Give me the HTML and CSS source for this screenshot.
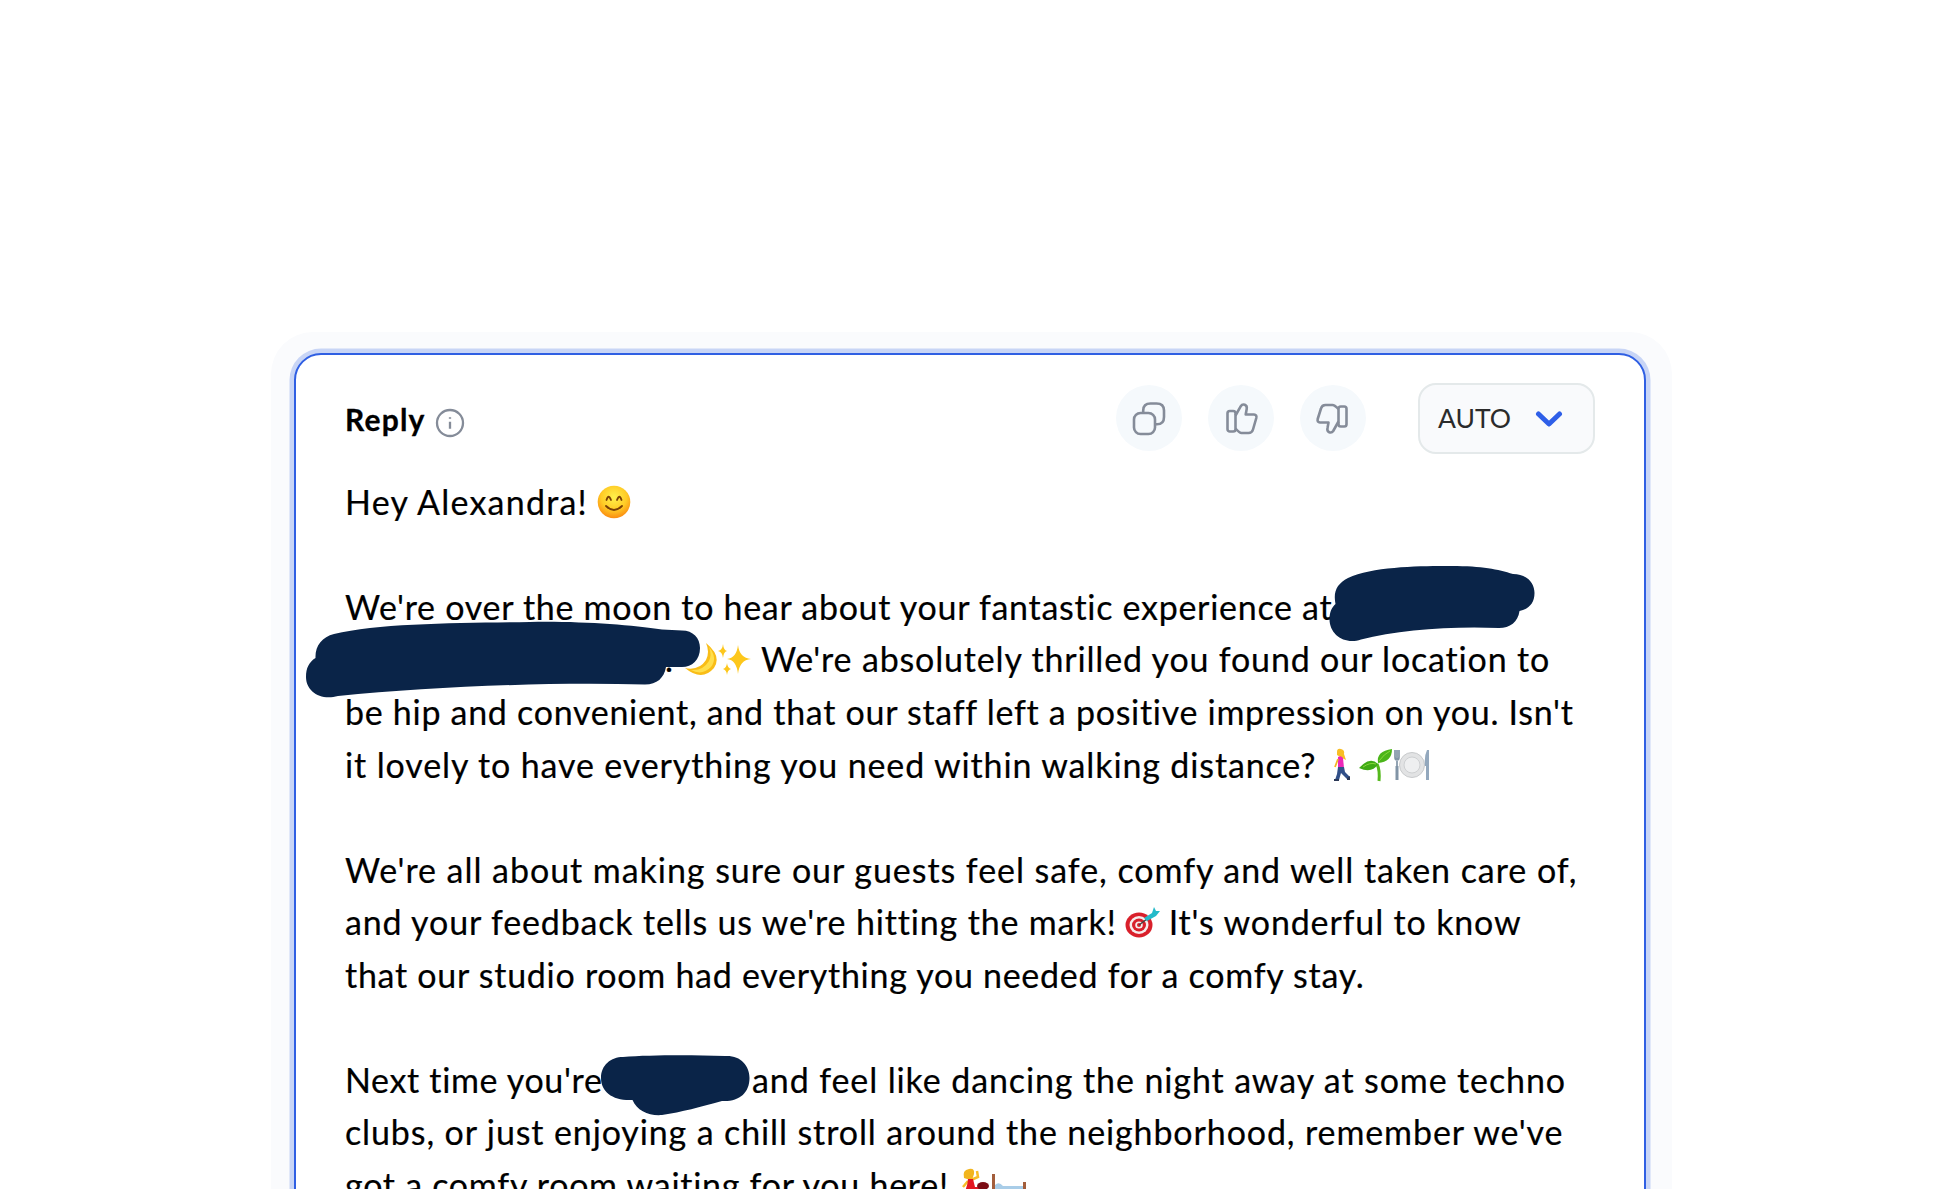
FILE: index.html
```html
<!DOCTYPE html>
<html lang="en">
<head>
    <meta charset="UTF-8">
    <title>Reply</title>
    <link rel="stylesheet" href="styles.css">
</head>
<body>

<div class="panel">
    <div class="card">
        <!-- header with actions -->
        <div class="card-header">
            <span class="title">Reply</span>
            <svg class="info" viewBox="0 0 30 30">
                <circle cx="15" cy="15" r="13"/>
                <path d="M15 13.8v7"/>
                <path d="M15 9.2v1.600"/>
            </svg>
            <div class="actions">
                <button class="icon-btn">
                    <svg viewBox="0 0 36 36">
                        <path d="M12.2 13V10.500Q12.200 3.500 19.500 3.500H25.500Q33 3.500 33 10.500V17Q33 24.300 26 24.300H24.500"/>
                        <rect x="3" y="13" width="21" height="21" rx="6.500"/>
                    </svg>
                </button>
                <button class="icon-btn">
                    <svg viewBox="0 0 36 36">
                        <rect x="4.500" y="11" width="8" height="20.500" rx="2.300"/>
                        <path d="M12.500 15.500L17.800 6.200Q19.300 3.800 21.800 4.800Q24.300 5.800 23.700 9L22.700 14.500H31Q34 14.700 33.300 18L30 29.500Q29 33 25.500 33H18.500Q16.500 33 12.500 28.500"/>
                    </svg>
                </button>
                <button class="icon-btn">
                    <svg viewBox="0 0 36 36">
                        <rect x="23.500" y="6.500" width="8" height="20" rx="2.300"/>
                        <path d="M23.500 21.500L18.200 31Q16.700 33.200 14.200 32.200Q11.800 31.200 12.500 28L13.500 22.500H5Q2 22.300 2.700 19L6 8.500Q7 5 10.500 5H17.500Q19.500 5 23.500 9"/>
                    </svg>
                </button>
            </div>
            <button class="select">
                <span>AUTO</span>
                <svg viewBox="0 0 28 20"><path d="M3.500 5L14 15L24.500 5"/></svg>
            </button>
        </div>

        <!-- reply text -->
        <div class="reply">
            <p class="line"><span class="s1">Hey Alexandra!</span>
                <svg class="emoji smile" viewBox="0 0 34 34">
                    <defs><radialGradient id="face" cx=".5" cy=".35" r=".65"><stop offset="0" stop-color="#fff04b"/><stop offset=".6" stop-color="#ffcb26"/><stop offset="1" stop-color="#fb8b10"/></radialGradient></defs>
                    <circle cx="17" cy="17" r="16.300" fill="url(#face)"/>
                    <g fill="none" stroke="#7b3f05" stroke-width="1.800" stroke-linecap="round"><path d="M9.500 15Q11.500 8.500 14 15M20 15Q22.500 8.500 24.500 15M9 21Q17 29 25 21"/></g>
                </svg>
            </p>
            <p class="line"></p>
            <p class="line"><span class="s2">We're over the moon to hear about your fantastic experience at</span></p>
            <p class="line"><span class="s3">.</span>
                <svg class="emoji moon" viewBox="0 0 34 34"><path d="M22 1Q38 14 30 26Q18 40 1 26Q15 29 22 18Q26 10 22 1Z" fill="#f9bd17"/><path d="M25 5Q34 16 27 25Q18 34 7 28Q19 29 25 19Q28 13 25 5Z" fill="#ffdf4c"/></svg>
                <svg class="emoji sparkle" viewBox="0 0 34 34"><g fill="#fdc71b"><path d="M20 3Q21.500 16 33 17Q21.500 18 20 32Q18.500 18 9 17Q18.500 16 20 3Z"/><path d="M5 2Q5.500 8 9 9Q5.500 10 5 16Q4.500 10 0 9Q4.500 8 5 2ZM9 21Q9.500 26 13 27Q9.500 28 9 33Q8.500 28 5 27Q8.500 26 9 21Z"/></g></svg>
                <span class="s4">We're absolutely thrilled you found our location to</span>
            </p>
            <p class="line"><span class="s5">be hip and convenient, and that our staff left a positive impression on you. Isn't</span></p>
            <p class="line"><span class="s6">it lovely to have everything you need within walking distance?</span>
                <svg class="emoji walk" viewBox="0 0 18 34"><path d="M4 4Q4 0 8 1Q12 2 11 6L13 12L9 10L4 7Z" fill="#f8bd24"/><path d="M5 9Q8 7 10 10L11 20H5Z" fill="#ec27b8"/><path d="M5 19H11L12 24L17 29L14 31L8 25L6 32H2L4 26Z" fill="#314f88"/><path d="M5 11L2 19" stroke="#f3b525" stroke-width="1.800" fill="none"/><path d="M1 31H6V33H1ZM14 30L17 28V32H14Z" fill="#2b3857"/></svg>
                <svg class="emoji plant" viewBox="0 0 34 34"><path d="M20 33Q21 22 18 16" stroke="#55b91d" stroke-width="3" fill="none"/><path d="M19 16Q11 8 0 20Q13 26 19 16Z" fill="#3faa16"/><path d="M19 15Q17 3 33 1Q33 14 19 15Z" fill="#4bb51a"/><path d="M4 19Q11 14 17 16M20 13Q25 6 31 3" stroke="#86d83a" fill="none"/></svg>
                <svg class="emoji plate" viewBox="0 0 36 34"><circle cx="18" cy="17" r="12.500" fill="#e2e3e4" stroke="#c8cacc"/><circle cx="18" cy="17" r="8" fill="#eeeff0" stroke="#ced0d2"/><path d="M3 13V31M1 2V9Q1 12 3 12Q5 12 5 9V2M3 2V11" fill="none" stroke="#8194a6" stroke-width="1.700"/><path d="M3 18V32" stroke="#8194a6" stroke-width="3"/><path d="M33 2Q30 8 31 18H32V32H35V2Z" fill="#93a8bd"/></svg>
            </p>
            <p class="line"></p>
            <p class="line"><span class="s7">We're all about making sure our guests feel safe, comfy and well taken care of,</span></p>
            <p class="line"><span class="s8">and your feedback tells us we're hitting the mark!</span>
                <svg class="emoji target" viewBox="0 0 36 34"><ellipse cx="14" cy="20" rx="13.500" ry="12.500" fill="#d9202b"/><ellipse cx="14" cy="20" rx="9.500" ry="9" fill="#f6eded"/><ellipse cx="14" cy="20" rx="7" ry="6.500" fill="#d9202b"/><ellipse cx="14" cy="20" rx="3.800" ry="3.500" fill="#f6eded"/><circle cx="14" cy="20" r="2" fill="#d9202b"/><path d="M14 20L22 14" stroke="#444" stroke-width="1.500"/><path d="M19 13L27 8L29 2L31 6L35 6L31 11L22 16Z" fill="#25bac9"/></svg>
                <span class="s9">It's wonderful to know</span>
            </p>
            <p class="line"><span class="s10">that our studio room had everything you needed for a comfy stay.</span></p>
            <p class="line"></p>
            <p class="line"><span class="s11">Next time you're</span><span class="s12">and feel like dancing the night away at some techno</span></p>
            <p class="line"><span class="s13">clubs, or just enjoying a chill stroll around the neighborhood, remember we've</span></p>
            <p class="line"><span class="s14">got a comfy room waiting for you here!</span>
                <svg class="emoji dance" viewBox="0 0 34 34"><path d="M7 10Q5 2 12 1Q18 0 17 6L15 12L10 11Z" fill="#f2b51e"/><path d="M14 12L21 9L20 3M11 13L6 19" stroke="#f7bd28" stroke-width="2.500" fill="none"/><path d="M11 11H16L18 19Q25 18 31 25L20 31H1Q10 25 11 11Z" fill="#e31620"/><ellipse cx="26" cy="18" rx="6" ry="4" fill="#7c0c14"/></svg>
                <svg class="emoji bed" viewBox="0 0 36 34"><path d="M1 6H4V31H1ZM32 14H35V31H32Z" fill="#a35e3c"/><path d="M4 19H32V27H4Z" fill="#75a6d0"/><path d="M4 17Q8 13 12 18H32V21H4Z" fill="#a9cde8"/></svg>
            </p>
        </div>
    </div>
</div>

<!-- marker strokes over the hidden names -->
<svg class="marker" viewBox="0 0 1944 1189">
    <path d="M1335.500 604C1333 591 1337 584 1348 578C1372 567 1415 566 1445 566C1480 565.500 1497 569 1513 574C1527 574 1534.500 583 1534.500 593C1534.500 603 1529 609 1519.500 611C1518 622 1510 628 1499 628C1450 626 1398 630 1361 639.500C1345 645 1329.500 635 1329.500 619C1329.500 612 1332 607 1335.500 604Z"/>
    <path d="M315.500 658C315 646 322 637 334 634C380 623 460 623 530 622C580 621 630 625 662 629.500L682 630.500C693 630.500 700 638 700 648C700 660 692 667 682 667H666C664 678 657 684.500 645 684.500C540 682 430 687 338 696C320 701 306 691 306 677C306 668 309 662 315.500 658Z"/>
    <path d="M601 1078C601 1065 611 1057 623 1057C650 1055 690 1055 725 1056C740 1055 749.500 1065 749.500 1078C749.500 1093 739 1102 722 1101C700 1107 682 1112 662 1115C649 1116 637 1111 632.500 1100C613 1101 601 1092 601 1078Z"/>
</svg>

</body>
</html>
```
FILE: styles.css
```css
* {
    box-sizing: border-box;
}
body {
    margin: 0;
    padding-top: 332px;
    height: 1189px;
    overflow: hidden;
    background: #fff;
    color: #000;
    font-family: Lato, sans-serif;
    position: relative;
}
.panel {
    width: 1401px;
    height: 857px;
    margin-left: 271px;
    padding: 21px 26px 0 23px;
    border-radius: 42px 42px 0 0;
    background: #fafbfd;
    overflow: hidden;
}
.card {
    height: 900px;
    padding: 0 49px;
    border: 2px solid #2f5fe3;
    border-radius: 27px;
    box-shadow: 0 0 0 4.5px #c8d5f6;
    background: #fff;
}
.card-header {
    display: flex;
    align-items: center;
    height: 120px;
    padding-top: 6px;
}
.title {
    margin-top: 2px;
    font-size: 30px;
    font-weight: bold;
    letter-spacing: 1.2px;
    -webkit-text-stroke: 0.3px #000;
}
.info {
    width: 30px;
    height: 30px;
    margin: 9px 0 0 9px;
    fill: none;
    stroke: #858c99;
    stroke-width: 2.3;
}
.actions {
    display: flex;
    gap: 26px;
    margin-left: auto;
}
.icon-btn {
    display: flex;
    align-items: center;
    justify-content: center;
    width: 66px;
    height: 66px;
    padding: 0;
    border: 0;
    border-radius: 50%;
    background: #f5f9fc;
}
.icon-btn svg {
    width: 36px;
    height: 36px;
    fill: none;
    stroke: #858c99;
    stroke-width: 2.6;
    stroke-linejoin: round;
}
.select {
    display: flex;
    align-items: center;
    width: 177px;
    height: 71px;
    margin-left: 52px;
    padding: 0 0 0 18px;
    border: 2px solid #e4e9ea;
    border-radius: 18px;
    background: #f9fafc;
    color: #2b2b2b;
    font-family: Lato, sans-serif;
    font-size: 26.5px;
}
.select svg {
    width: 28px;
    height: 20px;
    margin: 2px 0 0 24px;
    fill: none;
    stroke: #2f5fe8;
    stroke-width: 5;
    stroke-linecap: round;
    stroke-linejoin: round;
}

/* reply text, tracking is tuned line by line */
.reply {
    font-size: 34px;
    -webkit-text-stroke: 0.2px #000;
}
.line {
    display: flex;
    align-items: center;
    height: 52.55px;
    margin: 0;
    white-space: nowrap;
}
.s1 { letter-spacing: 1.22px; }
.s2 { letter-spacing: 0.71px; }
.s3 { margin-left: 320px; }
.s4 { margin-left: 9px; letter-spacing: 0.83px; }
.s5 { letter-spacing: 0.71px; }
.s6 { letter-spacing: 0.87px; }
.s7 { letter-spacing: 0.95px; }
.s8 { letter-spacing: 0.84px; }
.s9 { margin-left: 8px; letter-spacing: 0.84px; }
.s10 { letter-spacing: 0.72px; }
.s11 { letter-spacing: 0.66px; }
.s12 { margin-left: 149.5px; letter-spacing: 0.89px; }
.s13 { letter-spacing: 0.88px; }
.s14 { letter-spacing: 0.72px; }

.emoji {
    flex: none;
    width: 34px;
    height: 34px;
    margin-top: 1px;
}
.smile {
    margin-left: 9px;
}
.moon {
    margin-left: 11px;
}
.walk {
    width: 18px;
    margin-left: 17px;
}
.plant {
    margin-left: 8px;
}
.plate {
    width: 36px;
    margin-left: 1px;
}
.target {
    width: 36px;
    margin-left: 8px;
}
.dance {
    margin-left: 8px;
}
.bed {
    width: 36px;
}

.marker {
    position: absolute;
    top: 0;
    left: 0;
    width: 1944px;
    height: 1189px;
    fill: #0a2448;
}
```
